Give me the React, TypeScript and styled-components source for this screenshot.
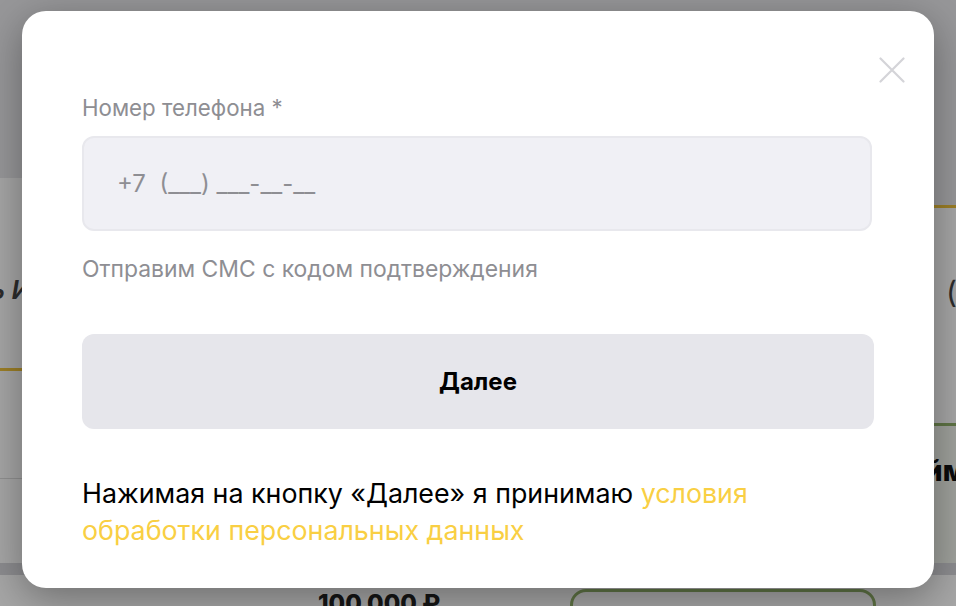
import React from 'react'
import styled, { createGlobalStyle } from 'styled-components'

const GlobalStyle = createGlobalStyle`
  html, body {
    margin: 0;
    padding: 0;
    width: 956px;
    height: 606px;
    overflow: hidden;
    font-family: Inter, 'Noto Sans', sans-serif;
  }
`

const Page = styled.div`
  position: relative;
  width: 956px;
  height: 606px;
  background: #e9e9ec;
  overflow: hidden;
`

const Header = styled.div`
  height: 178px;
`

const Cards = styled.div`
  display: grid;
  grid-template-columns: 470px 1fr 40px;
  height: 385px;
`

const LeftCard = styled.div`
  background: #fff;
  display: flex;
  flex-direction: column;
  padding-top: 96px;
  .tab {
    font-size: 26px;
    font-weight: 600;
    font-style: italic;
    color: #444;
    margin-left: -10px;
    height: 94px;
  }
  .tab_line {
    height: 3px;
    width: 60px;
    background: #f0c33c;
  }
  .sep {
    margin-top: 107px;
    height: 1px;
    background: #ddd;
  }
`

const Spacer = styled.div``

const RightCard = styled.div`
  margin-top: 27px;
  background: #fff;
  border-top: 3px solid #f0c33c;
  display: flex;
  flex-direction: column;
  .paren {
    margin-top: 66px;
    margin-left: 30px;
    font-size: 30px;
    color: #444;
    height: 149px;
  }
  .zone {
    flex: 1;
    background: #f4f8f0;
    border-top: 3px solid #93b26b;
    font-size: 28px;
    font-weight: 800;
    color: #111;
    padding-top: 28px;
    text-indent: -26px;
    white-space: nowrap;
  }
`

const Footer = styled.div`
  display: flex;
  align-items: flex-start;
  height: 43px;
  background: #fff;
  border-top: 12px solid #d7d7dc;
  .sum {
    margin-left: 318px;
    margin-top: 14px;
    font-size: 24px;
    font-weight: 800;
    color: #222;
  }
  .box {
    margin-left: 130px;
    margin-top: 14px;
    width: 300px;
    height: 60px;
    border: 3px solid #93b26b;
    border-radius: 16px;
  }
`

const Overlay = styled.div`
  position: absolute;
  inset: 0;
  background: rgba(0, 0, 0, 0.35);
  padding: 11px 22px;
`

const Modal = styled.div`
  position: relative;
  width: 912px;
  height: 577px;
  box-sizing: border-box;
  background: #fff;
  border-radius: 24px;
  box-shadow: 0 10px 40px rgba(0, 0, 0, 0.35);
  padding: 84px 60px 0 60px;
  display: flex;
  flex-direction: column;
`

const CloseButton = styled.button`
  position: absolute;
  top: 46px;
  right: 29px;
  width: 26px;
  height: 26px;
  padding: 0;
  border: 0;
  background: none;
  cursor: pointer;
`

const Label = styled.div`
  font-size: 22.3px;
  line-height: 26px;
  color: #8e8e93;
`

const PhoneInput = styled.div`
  margin-top: 15px;
  margin-right: 2px;
  height: 95px;
  box-sizing: border-box;
  background: #f0f0f5;
  border: 2px solid #e8e8ed;
  border-radius: 12px;
  padding-left: 33px;
  display: flex;
  align-items: center;
  font-size: 24px;
  color: #8e8e93;
  white-space: pre;
`

const Hint = styled.div`
  margin-top: 25px;
  font-size: 22.9px;
  line-height: 26px;
  color: #8e8e93;
`

const NextButton = styled.button`
  margin-top: 52px;
  height: 95px;
  border: 0;
  border-radius: 12px;
  background: #e6e6eb;
  font-family: inherit;
  font-size: 24px;
  font-weight: 700;
  color: #000;
`

const Consent = styled.p`
  margin: 46px 0 0;
  max-width: 700px;
  font-size: 26.8px;
  line-height: 37px;
  color: #000;
  a {
    color: #f9cf43;
    text-decoration: none;
  }
`

export default function App() {
  return (
    <Page>
      <GlobalStyle />
      <Header />
      <Cards>
        <LeftCard>
          <div className="tab">ь И</div>
          <div className="tab_line" />
          <div className="sep" />
        </LeftCard>
        <Spacer />
        <RightCard>
          <div className="paren">(</div>
          <div className="zone">Займ</div>
        </RightCard>
      </Cards>
      <Footer>
        <div className="sum">100 000 ₽</div>
        <div className="box" />
      </Footer>
      <Overlay>
        <Modal>
          <CloseButton aria-label="Закрыть">
            <svg width="26" height="26" viewBox="0 0 26 26" fill="none">
              <path d="M1.5 1.5L24.5 24.5M24.5 1.5L1.5 24.5" stroke="#d4d4d8" strokeWidth="2.2" strokeLinecap="round" />
            </svg>
          </CloseButton>
          <Label>Номер телефона *</Label>
          <PhoneInput>{'+7  (___) ___-__-__'}</PhoneInput>
          <Hint>Отправим СМС с кодом подтверждения</Hint>
          <NextButton>Далее</NextButton>
          <Consent>
            Нажимая на кнопку «Далее» я принимаю <a href="#">условия обработки персональных данных</a>
          </Consent>
        </Modal>
      </Overlay>
    </Page>
  )
}
